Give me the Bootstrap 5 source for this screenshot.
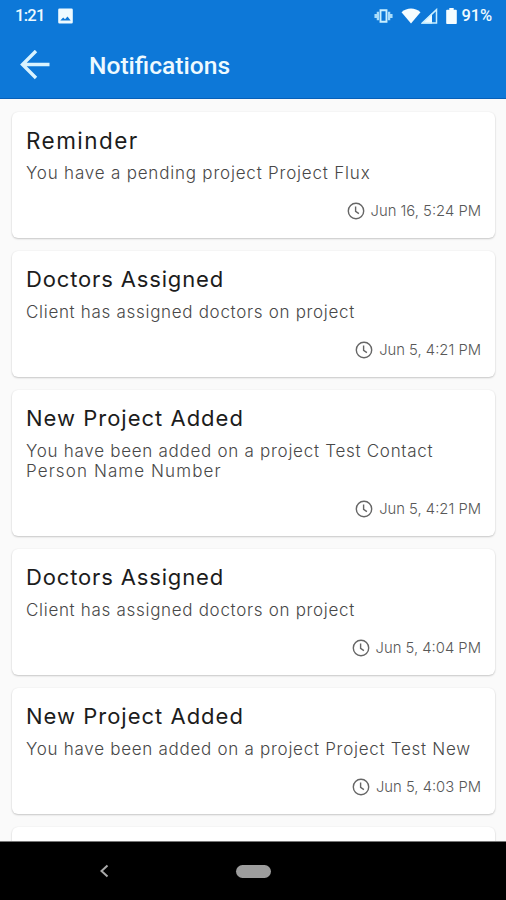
<!DOCTYPE html>
<html lang="en">
<head>
<meta charset="utf-8">
<meta name="viewport" content="width=device-width, initial-scale=1">
<title>Notifications</title>
<link href="https://cdn.jsdelivr.net/npm/bootstrap@5.3.0/dist/css/bootstrap.min.css" rel="stylesheet">
<style>
body { font-family: Inter, "Open Sans", sans-serif; background: #fafafa; }
svg { display: block; flex: none; }
.screen { height: 900px; }
.app-header { height: 99px; background: #0d78d8; color: #eefaff; border-bottom: 1px solid #0760b8; }
.status-bar { height: 32px; padding: 0 14px 0 15px; font: 500 16.5px/32px Roboto, sans-serif; }
.clock-text { width: 43px; letter-spacing: -.7px; }
.battery-level { margin-left: 4px; letter-spacing: -.1px; }
.toolbar { height: 66px; padding-left: 20px; }
.toolbar h1 { margin: 2px 0 0 39px; font: 500 24.6px/32px Roboto, sans-serif; }
.feed { padding: 12.5px 11px 0 12px; gap: 13px; }
.notice { height: 126px; flex: none; padding: 15px 14px 17px; border: 0; border-radius: 6px; background: #fff; box-shadow: 0 1px 2px rgba(0,0,0,.2), 0 0 2px rgba(0,0,0,.06); }
.notice-tall { height: 146px; }
.notice h2 { margin: 0 0 9px; font-size: 22px; line-height: 27px; font-weight: 400; color: #1c1c1c; letter-spacing: .85px; white-space: nowrap; }
.notice p { margin: 0; font-size: 17px; line-height: 20.5px; font-weight: 300; color: #484848; letter-spacing: .69px; white-space: nowrap; }
.notice-reminder h2 { font-size: 22.5px; letter-spacing: 1.45px; }
.notice-reminder p { letter-spacing: .8px; }
.notice-added h2 { letter-spacing: 1px; }
.notice-added p { letter-spacing: .72px; }
.notice-added .line-end { letter-spacing: 1.1px; }
.stamp { font-size: 14.8px; line-height: 20px; font-weight: 300; color: #585858; gap: 6px; }
.nav-keys { height: 59px; background: #000; border-top: 1px solid #777; }
.key-back { margin-left: 99px; }
.key-home { width: 35px; height: 13px; margin-left: 127px; background: #9d9d9d; }
</style>
<script src="https://cdn.jsdelivr.net/npm/bootstrap@5.3.0/dist/js/bootstrap.bundle.min.js"></script>
</head>
<body>
<svg width="0" height="0" class="d-none"><symbol id="clock" viewBox="0 0 18 18"><g fill="none" stroke="#666" stroke-width="1.4"><circle cx="9" cy="9" r="7.700"/><path d="M8.600 4.600v4.800l3.300 2.200"/></g></symbol></svg>
<div class="screen d-flex flex-column overflow-hidden">
  <header class="app-header flex-shrink-0">
    <div class="status-bar d-flex align-items-center">
      <span class="clock-text">1:21</span>
      <svg width="15" height="16" viewBox="0 0 15 16"><path fill="#eefaff" fill-rule="evenodd" d="M1.500.5h12a1.300 1.300 0 0 1 1.300 1.300v12.400a1.300 1.300 0 0 1-1.300 1.300h-12A1.300 1.300 0 0 1 .2 14.200V1.800A1.300 1.300 0 0 1 1.500.5zM2.300 12.500h10.400L9.500 8.500 7 11.300 5.200 9.400z"/></svg>
      <svg class="ms-auto" width="19" height="14" viewBox="0 0 19 14"><path d="M6.500 1.300h6v11.400h-6z" fill="none" stroke="#c9efff" stroke-width="1.900"/><path d="M3.900 2.800v8.400M15.100 2.800v8.400M1.600 5v4M17.400 5v4" stroke="#a9dcfa" stroke-width="2.300"/></svg>
      <svg class="ms-2" width="20" height="16" viewBox="0 0 20 16"><path fill="#f6fdff" d="M.5 4.200C6-.7 14-.7 19.500 4.200L10 15.600z"/></svg>
      <svg width="17" height="16" viewBox="0 0 17 16"><path fill="#eefaff" d="M.5 15.500 11 5.200v10.300z"/><path d="M1.500 14.900 15.500 1.600v13.300z" fill="none" stroke="#c9efff" stroke-width="1.500"/></svg>
      <svg class="ms-2" width="11" height="16" viewBox="0 0 11 16"><path fill="#f6fdff" d="M3.300 0h4.400v1.800H10a.8.800 0 0 1 .8.800v12.600a.8.800 0 0 1-.8.800H1a.8.800 0 0 1-.8-.8V2.600a.8.800 0 0 1 .8-.8h2.300z"/></svg>
      <span class="battery-level">91%</span>
    </div>
    <div class="toolbar d-flex align-items-center">
      <svg width="30" height="30" viewBox="0 0 30 30"><path d="M29.500 14.500H2.500M16 1 2.500 14.500 16 28" fill="none" stroke="#d9f3ff" stroke-width="3.400"/></svg>
      <h1>Notifications</h1>
    </div>
  </header>
  <main class="feed d-flex flex-column flex-grow-1 overflow-hidden">
    <article class="card notice notice-reminder"><h2>Reminder</h2><p>You have a pending project Project Flux</p>
      <div class="stamp d-flex align-items-center justify-content-end mt-auto"><svg width="18" height="18"><use href="#clock"/></svg><time>Jun 16, 5:24 PM</time></div></article>
    <article class="card notice"><h2>Doctors Assigned</h2><p>Client has assigned doctors on project</p>
      <div class="stamp d-flex align-items-center justify-content-end mt-auto"><svg width="18" height="18"><use href="#clock"/></svg><time>Jun 5, 4:21 PM</time></div></article>
    <article class="card notice notice-added notice-tall"><h2>New Project Added</h2><p>You have been added on a project Test Contact<br><span class="line-end">Person Name Number</span></p>
      <div class="stamp d-flex align-items-center justify-content-end mt-auto"><svg width="18" height="18"><use href="#clock"/></svg><time>Jun 5, 4:21 PM</time></div></article>
    <article class="card notice"><h2>Doctors Assigned</h2><p>Client has assigned doctors on project</p>
      <div class="stamp d-flex align-items-center justify-content-end mt-auto"><svg width="18" height="18"><use href="#clock"/></svg><time>Jun 5, 4:04 PM</time></div></article>
    <article class="card notice notice-added"><h2>New Project Added</h2><p>You have been added on a project Project Test New</p>
      <div class="stamp d-flex align-items-center justify-content-end mt-auto"><svg width="18" height="18"><use href="#clock"/></svg><time>Jun 5, 4:03 PM</time></div></article>
    <article class="card notice"></article>
  </main>
  <footer class="nav-keys d-flex align-items-center flex-shrink-0">
    <svg class="key-back" width="10" height="14" viewBox="0 0 10 14"><path d="M8.500 1.500 2.500 7l6 5.500" fill="none" stroke="#aaa" stroke-width="2"/></svg>
    <div class="key-home rounded-pill"></div>
  </footer>
</div>
</body>
</html>
